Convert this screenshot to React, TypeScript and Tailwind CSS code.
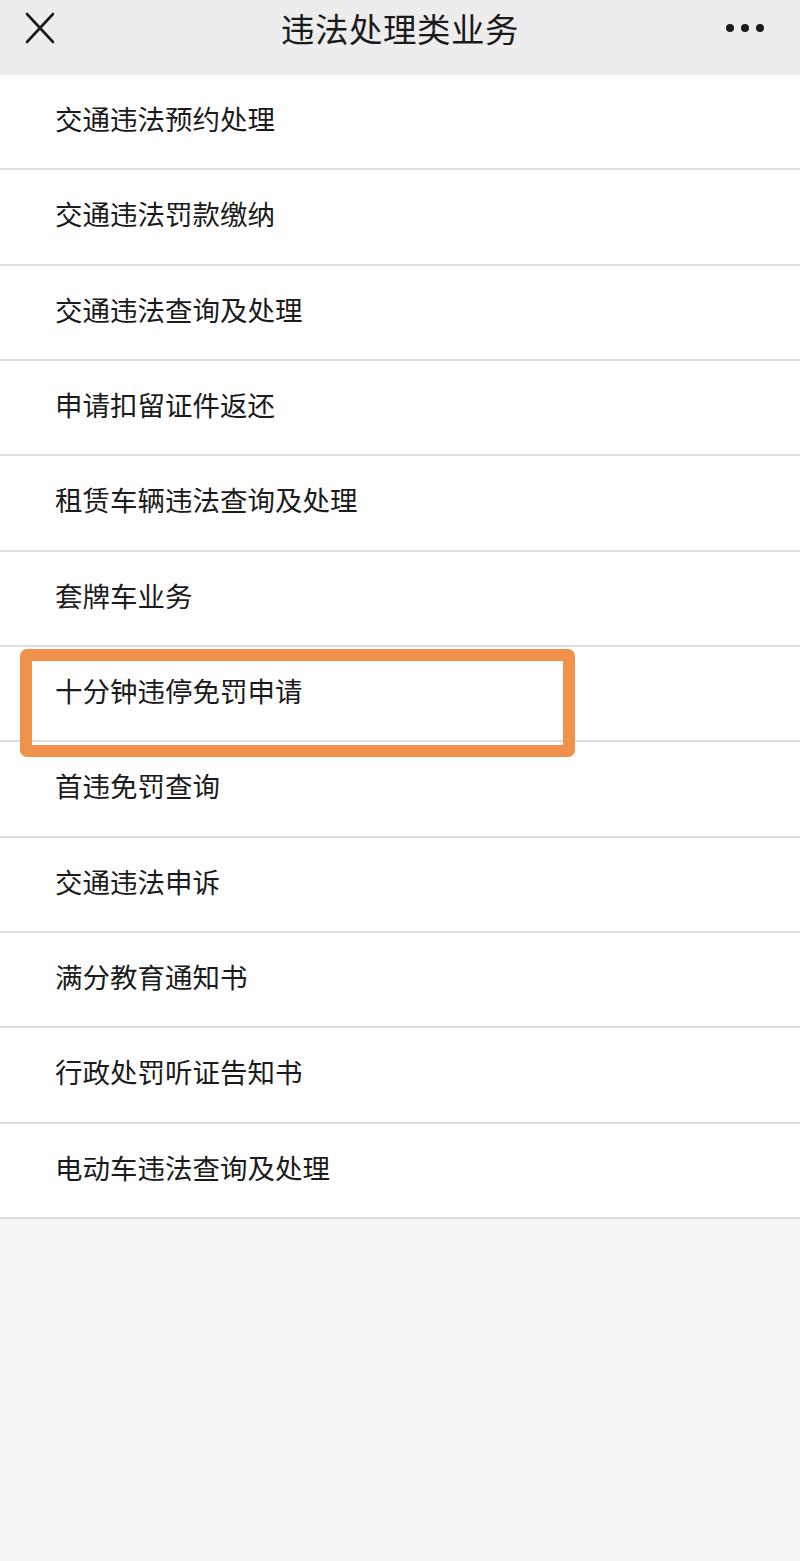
import React from 'react';

const items = [
  '交通违法预约处理',
  '交通违法罚款缴纳',
  '交通违法查询及处理',
  '申请扣留证件返还',
  '租赁车辆违法查询及处理',
  '套牌车业务',
  '十分钟违停免罚申请',
  '首违免罚查询',
  '交通违法申诉',
  '满分教育通知书',
  '行政处罚听证告知书',
  '电动车违法查询及处理',
];

const HIGHLIGHT = 6;

export default function App() {
  return (
    <div
      className="w-[800px] h-[1561px] bg-[#f4f4f4] text-[#1b1b1b] overflow-hidden"
      style={{ fontFamily: '"Noto Sans CJK SC", "Noto Sans", sans-serif' }}
    >
      {/* Nav bar */}
      <div className="h-[75px] bg-[#ededed] flex items-start px-[24px]">
        <div className="flex-1 h-[56px] flex items-center">
          <svg width="32" height="32" viewBox="0 0 32 32" fill="none">
            <path d="M3 2 L29 30 M29 2 L3 30" stroke="#1b1b1b" strokeWidth="2.6" strokeLinecap="round" />
          </svg>
        </div>
        <div className="h-[56px] leading-[56px] text-[33.5px] font-normal tracking-[0.5px]">违法处理类业务</div>
        <div className="flex-1 h-[56px] flex items-center justify-end">
          <div className="flex items-center gap-[7px] mr-[12px]">
            <span className="w-[8px] h-[8px] rounded-full bg-[#1b1b1b]" />
            <span className="w-[8px] h-[8px] rounded-full bg-[#1b1b1b]" />
            <span className="w-[8px] h-[8px] rounded-full bg-[#1b1b1b]" />
          </div>
        </div>
      </div>

      {/* List */}
      <div className="bg-white">
        {items.map((label, i) => (
          <div
            key={label}
            className="relative h-[95.33px] border-b-2 border-[#dedede] flex items-center pl-[55px] pb-[6px]"
          >
            <span className="text-[27.5px] leading-none">{label}</span>
            {i === HIGHLIGHT && (
              <div className="absolute left-[20px] top-[2px] w-[555px] h-[108px] border-[12px] border-[#f0924a] rounded-[7px]" />
            )}
          </div>
        ))}
      </div>
    </div>
  );
}
